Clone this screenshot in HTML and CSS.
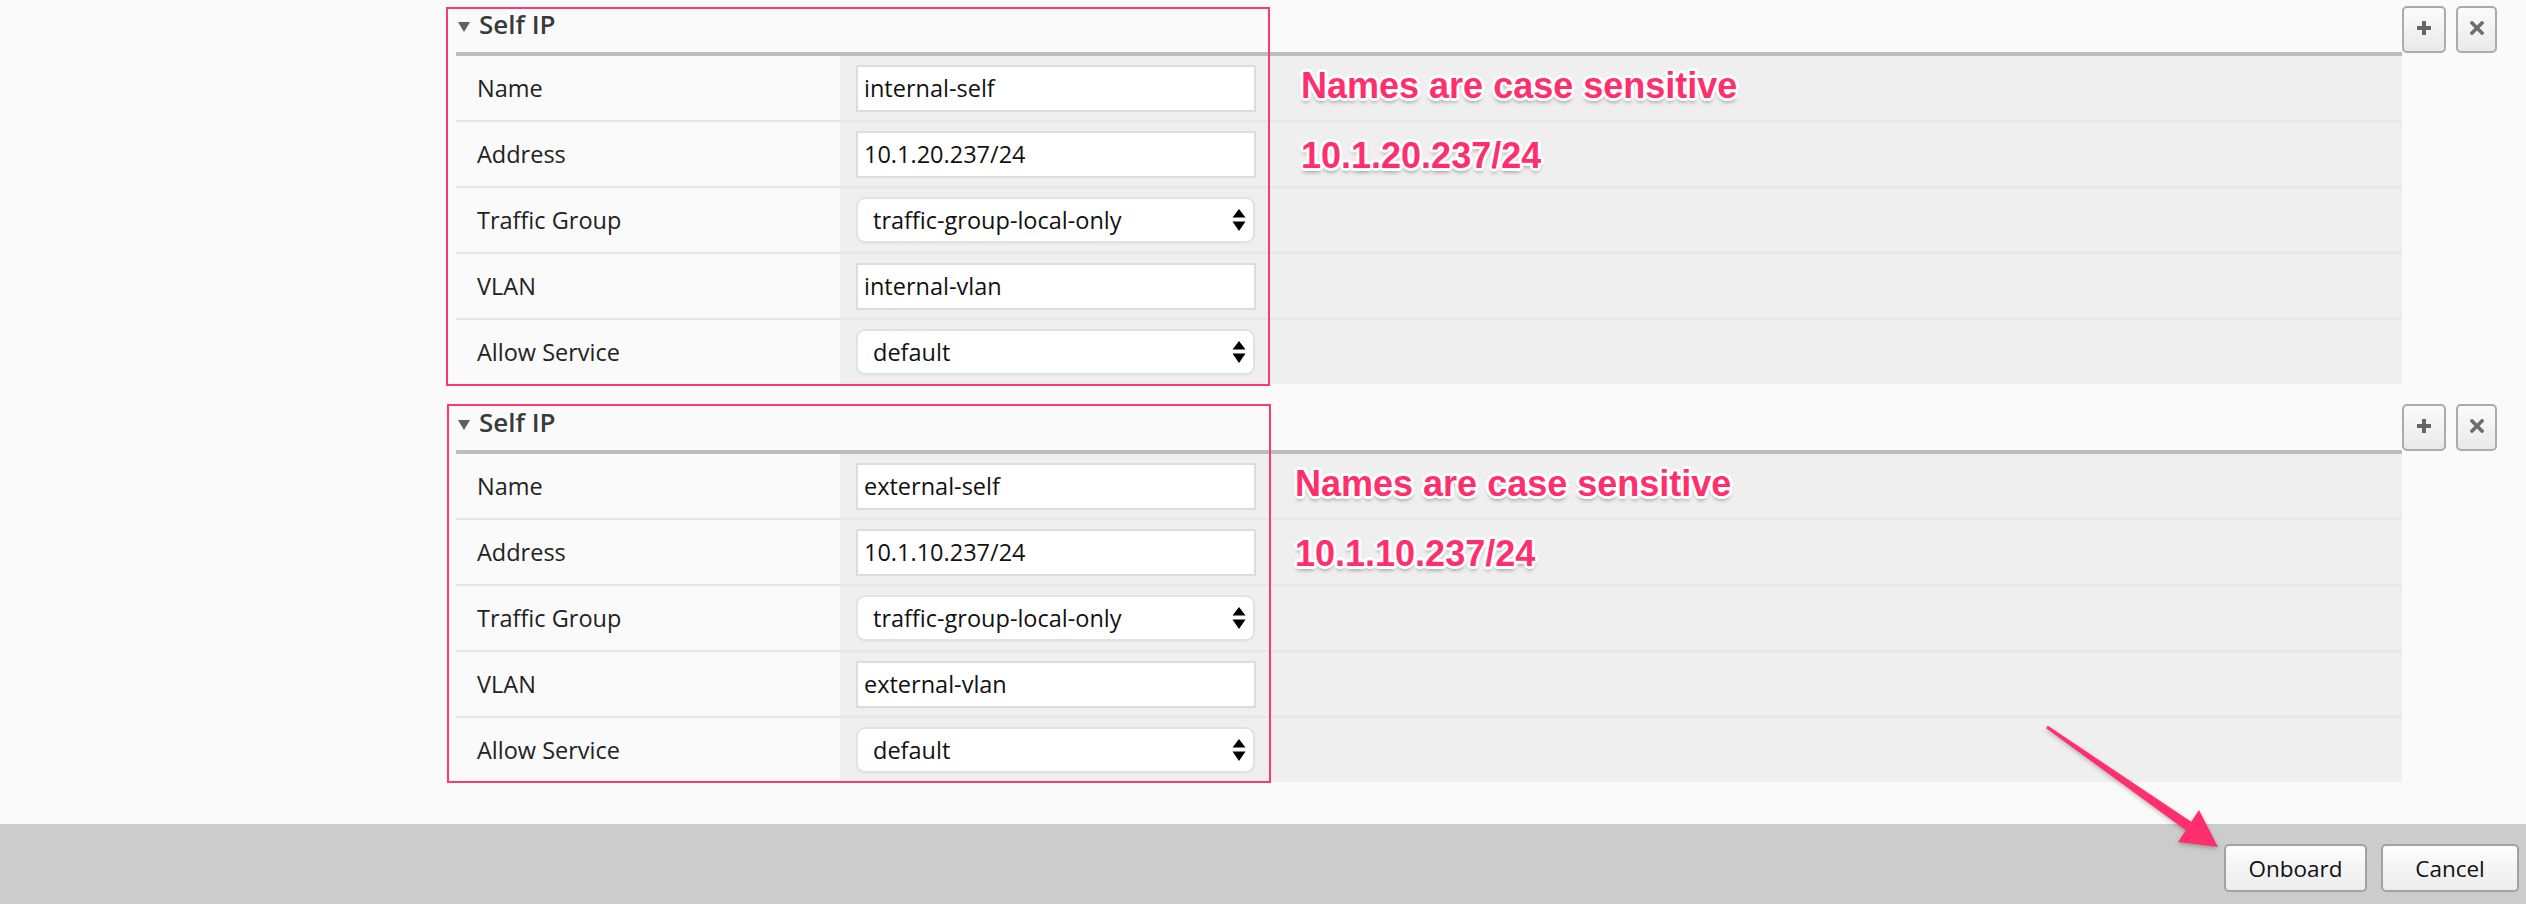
FILE: index.html
```html
<!DOCTYPE html>
<html lang="en">
<head>
<meta charset="utf-8">
<title>Self IP</title>
<link rel="stylesheet" href="styles.css">
</head>
<body>
<div class="page">
  <div class="sections">
    <section class="section">
      <div class="main">
        <div class="frame"></div>
        <div class="sec-head">
          <span class="caret"></span><span class="sec-title">Self IP</span>
        </div>
        <div class="row">
          <div class="label">Name</div>
          <div class="value"><div class="input">internal-self</div><div class="ann ann-name">Names are case sensitive</div></div>
        </div>
        <div class="row">
          <div class="label">Address</div>
          <div class="value"><div class="input">10.1.20.237/24</div><div class="ann ann-addr">10.1.20.237/24</div></div>
        </div>
        <div class="row">
          <div class="label">Traffic Group</div>
          <div class="value"><div class="select"><span>traffic-group-local-only</span><svg class="updown" viewBox="0 0 14 24" width="14" height="24"><path d="M7 1 L13.5 9.5 H0.5 Z M7 23 L13.5 13.5 H0.5 Z" fill="#000"/></svg></div></div>
        </div>
        <div class="row">
          <div class="label">VLAN</div>
          <div class="value"><div class="input">internal-vlan</div></div>
        </div>
        <div class="row">
          <div class="label">Allow Service</div>
          <div class="value"><div class="select"><span>default</span><svg class="updown" viewBox="0 0 14 24" width="14" height="24"><path d="M7 1 L13.5 9.5 H0.5 Z M7 23 L13.5 13.5 H0.5 Z" fill="#000"/></svg></div></div>
        </div>
      </div>
      <div class="actions">
        <button class="icon-btn plus" type="button"><svg viewBox="0 0 16 16" width="16" height="16"><path d="M6 1h4v5h5v4h-5v5H6v-5H1V6h5z" fill="#666"/></svg></button>
        <button class="icon-btn close" type="button"><svg viewBox="0 0 14 14" width="14" height="14"><path d="M2 2 L12 12 M12 2 L2 12" stroke="#6e6e6e" stroke-width="3.6" stroke-linecap="square"/></svg></button>
      </div>
    </section>

    <section class="section second">
      <div class="main">
        <div class="frame"></div>
        <div class="sec-head">
          <span class="caret"></span><span class="sec-title">Self IP</span>
        </div>
        <div class="row">
          <div class="label">Name</div>
          <div class="value"><div class="input">external-self</div><div class="ann ann-name">Names are case sensitive</div></div>
        </div>
        <div class="row">
          <div class="label">Address</div>
          <div class="value"><div class="input">10.1.10.237/24</div><div class="ann ann-addr">10.1.10.237/24</div></div>
        </div>
        <div class="row">
          <div class="label">Traffic Group</div>
          <div class="value"><div class="select"><span>traffic-group-local-only</span><svg class="updown" viewBox="0 0 14 24" width="14" height="24"><path d="M7 1 L13.5 9.5 H0.5 Z M7 23 L13.5 13.5 H0.5 Z" fill="#000"/></svg></div></div>
        </div>
        <div class="row">
          <div class="label">VLAN</div>
          <div class="value"><div class="input">external-vlan</div></div>
        </div>
        <div class="row">
          <div class="label">Allow Service</div>
          <div class="value"><div class="select"><span>default</span><svg class="updown" viewBox="0 0 14 24" width="14" height="24"><path d="M7 1 L13.5 9.5 H0.5 Z M7 23 L13.5 13.5 H0.5 Z" fill="#000"/></svg></div></div>
        </div>
      </div>
      <div class="actions">
        <button class="icon-btn plus" type="button"><svg viewBox="0 0 16 16" width="16" height="16"><path d="M6 1h4v5h5v4h-5v5H6v-5H1V6h5z" fill="#666"/></svg></button>
        <button class="icon-btn close" type="button"><svg viewBox="0 0 14 14" width="14" height="14"><path d="M2 2 L12 12 M12 2 L2 12" stroke="#6e6e6e" stroke-width="3.6" stroke-linecap="square"/></svg></button>
      </div>
    </section>
  </div>

  <footer class="footer">
    <button class="btn onboard" type="button">Onboard</button>
    <button class="btn cancel" type="button">Cancel</button>
  </footer>

  <svg class="arrow" viewBox="0 0 200 150" width="200" height="150">
    <polygon points="16.1,18.2 155.8,120.2 148,132 188,137 169,100 161.2,111.8 17.9,15.8" fill="#ff2f6e"/>
  </svg>
</div>
</body>
</html>
```

FILE: styles.css
```css
html, body {
  margin: 0;
  padding: 0;
}

body {
  width: 2526px;
  height: 904px;
  overflow: hidden;
  background: #fafafa;
  font-family: "Open Sans", "Noto Sans", sans-serif;
  color: #222;
}

.page {
  position: relative;
  width: 2526px;
  height: 904px;
  display: flex;
  flex-direction: column;
}

.sections {
  display: flex;
  flex-direction: column;
  gap: 14px;
  padding-left: 456px;
  margin-bottom: 42px;
}

.section {
  display: flex;
}

.main {
  position: relative;
  width: 1946px;
}

.frame {
  position: absolute;
  left: -10px;
  top: 7px;
  width: 824px;
  height: 379px;
  box-sizing: border-box;
  border: 2px solid #fb3a74;
  pointer-events: none;
  z-index: 2;
}

.second .frame {
  top: 6px;
  left: -9px;
}

.sec-head {
  height: 48px;
  line-height: 48px;
  padding-bottom: 4px;
  padding-left: 2px;
  border-bottom: 4px solid #bdbdbd;
  display: flex;
  align-items: center;
}

.caret {
  width: 0;
  height: 0;
  border-left: 6px solid transparent;
  border-right: 6px solid transparent;
  border-top: 10px solid #5f5f5f;
  margin-right: 9px;
  margin-top: 6px;
}

.sec-title {
  font-size: 26px;
  font-weight: 600;
  color: #3a3a3a;
  line-height: 48px;
}

.row {
  display: flex;
  height: 64px;
  border-top: 2px solid #e6e6e6;
}

.sec-head + .row {
  border-top: 0;
}

.label {
  width: 363px;
  padding-left: 21px;
  display: flex;
  align-items: center;
  font-size: 23.5px;
  color: #222;
  background: #fafafa;
}

.value {
  flex: 1;
  background: #efefef;
  display: flex;
  align-items: center;
  padding-left: 16px;
}

.input {
  width: 400px;
  height: 47px;
  box-sizing: border-box;
  background: #fff;
  border: 2px solid #dcdcdc;
  padding-left: 6px;
  display: flex;
  align-items: center;
  font-size: 23.5px;
  color: #111;
}

.select {
  width: 399px;
  height: 46px;
  box-sizing: border-box;
  background: #fff;
  border: 2px solid #e2e2e2;
  border-radius: 9px;
  padding-left: 15px;
  padding-right: 7px;
  display: flex;
  align-items: center;
  justify-content: space-between;
  font-size: 23.5px;
  color: #111;
  box-shadow: 0 1px 1px rgba(0,0,0,0.04);
}

.updown {
  display: block;
}

.ann {
  margin-left: 45px;
  font-family: "Liberation Sans", Arial, sans-serif;
  font-weight: bold;
  font-size: 36px;
  line-height: 40px;
  color: #ff2f6e;
  white-space: nowrap;
  text-shadow:
    2px 0 0 #fff, -2px 0 0 #fff, 0 2px 0 #fff, 0 -2px 0 #fff,
    2px 2px 0 #fff, -2px -2px 0 #fff, 2px -2px 0 #fff, -2px 2px 0 #fff,
    3px 0 0 #fff, -3px 0 0 #fff, 0 3px 0 #fff, 0 -3px 0 #fff,
    0 4px 4px rgba(0,0,0,0.4);
}

.ann-name {
  margin-bottom: 4px;
}

.ann-addr {
  margin-top: 4px;
}

.second .ann {
  margin-left: 39px;
}

.actions {
  display: flex;
  gap: 10px;
  padding-top: 6px;
  align-items: flex-start;
}

.icon-btn {
  height: 47px;
  padding: 0;
  box-sizing: border-box;
  border: 2px solid #ababab;
  border-radius: 5px;
  background: linear-gradient(#fbfbfb, #e9e9e9);
  display: flex;
  align-items: center;
  justify-content: center;
}

.icon-btn.plus {
  width: 44px;
}

.icon-btn.close {
  width: 41px;
}

.icon-btn svg {
  display: block;
  margin-top: -3px;
}

.footer {
  height: 80px;
  box-sizing: border-box;
  background: #cccccc;
  display: flex;
  justify-content: flex-end;
  align-items: flex-start;
  gap: 14px;
  padding-top: 20px;
  padding-right: 7px;
}

.btn {
  height: 48px;
  box-sizing: border-box;
  border: 2px solid #a2a2a2;
  border-radius: 5px;
  background: linear-gradient(#fdfdfd, #ececec);
  font-family: "Open Sans", "Noto Sans", sans-serif;
  font-size: 22.5px;
  color: #111;
  padding: 0;
}

.btn.onboard {
  width: 143px;
}

.btn.cancel {
  width: 138px;
}

.arrow {
  position: absolute;
  left: 2030px;
  top: 710px;
  filter: drop-shadow(0 2px 2px rgba(0,0,0,0.25));
}
```
